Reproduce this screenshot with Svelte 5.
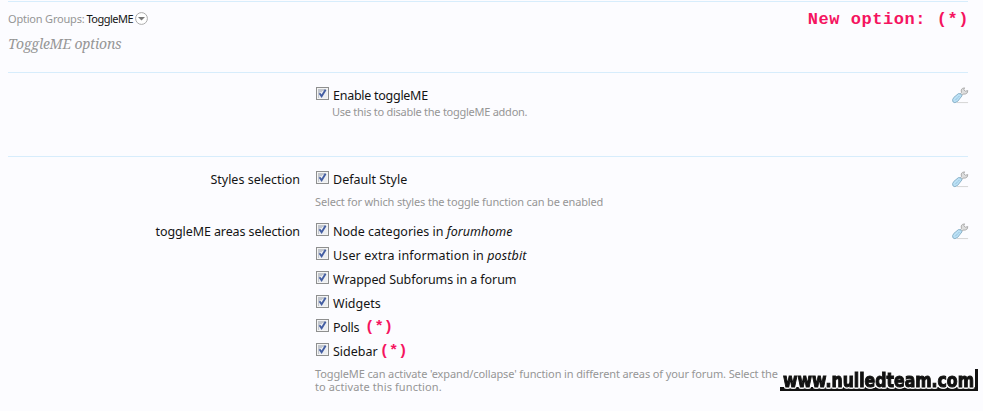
<script>
    const areas = [
        { label: "Node categories in ", place: "forumhome", fit: "nodes" },
        { label: "User extra information in ", place: "postbit", fit: "extra" },
        { label: "Wrapped Subforums in a forum", fit: "wrapped" },
        { label: "Widgets", fit: "widgets" },
        { label: "Polls", isNew: true, fit: "polls" },
        { label: "Sidebar", isNew: true, fit: "sidebar" },
    ];
</script>

{#snippet box()}
    <svg class="box" width="13" height="13" viewBox="0 0 13 13" shape-rendering="crispEdges">
        <rect width="13" height="13" fill="#8e8f8f" />
        <rect x="1" y="1" width="11" height="11" fill="#f4f4f4" />
        <rect x="2" y="2" width="9" height="9" fill="#c3c7ce" />
        <path d="M3 11V6l8-4v9z" fill="#eceef1" />
        <path d="M3.5 6.2L5.6 9.2 9.6 2.8" fill="none" stroke="#435da2" stroke-width="1.9" shape-rendering="auto" />
    </svg>
{/snippet}

{#snippet tool()}
    <svg class="tool" width="17" height="17" viewBox="0 0 18 18">
        <path d="M5 16.5H17" stroke="#d2d2d2" stroke-width="1" />
        <path
            d="M8.5 7.3L10 5.8Q9 2.6 11 1.5L13.3.9 12.5 3 14 4.5 16.7 3.8Q17 6.8 14 7.5L11.7 7.5 10.2 9z"
            fill="#dedede" stroke="#aaa" stroke-width="1"
        />
        <path d="M2 11L6.8 7Q9.8 6.4 10.6 9.3L6 15.2Q2.6 17.8 1 15.7-.2 13.5 2 11z" fill="#bce1f6" stroke="#85aec6" stroke-width="1" />
        <path d="M3.5 14L8 9.4" stroke="#86b7d3" stroke-width="1" stroke-dasharray="1.5 .7" />
    </svg>
{/snippet}

<main>
    <header>
        <div class="top">
            <div class="groups">
                <span class="crumb">Option Groups:</span>
                <span class="current">ToggleME</span>
                <svg width="13" height="13" viewBox="0 0 13 13">
                    <circle cx="6.5" cy="6.5" r="5.9" fill="#fff" stroke="#aaa" />
                    <path d="M3 5H10L6.5 8.5z" fill="#777" />
                </svg>
            </div>
            <strong class="legend">New option: (*)</strong>
        </div>
        <h1>ToggleME options</h1>
    </header>

    <section class="enable">
        <div class="row">
            <div class="name"></div>
            <div class="controls">
                <label class="check">{@render box()}<span class="enabled">Enable toggleME</span></label>
                <p class="hint indent">Use this to disable the toggleME addon.</p>
            </div>
            {@render tool()}
        </div>
    </section>

    <section class="settings">
        <div class="row styles">
            <div class="name">Styles selection</div>
            <div class="controls">
                <label class="check">{@render box()}<span>Default Style</span></label>
                <p class="hint select">Select for which styles the toggle function can be enabled</p>
            </div>
            {@render tool()}
        </div>
        <div class="row">
            <div class="name areaname">toggleME areas selection</div>
            <div class="controls">
                {#each areas as area}
                    <label class="check">
                        {@render box()}
                        <span class={area.fit}>{area.label}{#if area.place}<em>{area.place}</em>{/if}</span>
                        {#if area.isNew}<strong class="new">(*)</strong>{/if}
                    </label>
                {/each}
                <p class="hint explain">ToggleME can activate 'expand/collapse' function in different areas of your forum. Select the<br /><span>to activate this function.</span></p>
            </div>
            {@render tool()}
        </div>
    </section>

    <svg class="watermark" width="200" height="26" viewBox="0 0 200 26">
        <rect x="1" y="19" width="198" height="4" fill="#111" />
        <rect x="196" y="1" width="3" height="22" fill="#111" />
        <text x="4" y="19" textLength="191" lengthAdjust="spacingAndGlyphs">www.nulledteam.com</text>
    </svg>
</main>

<style>
    :global(body) {
        background: #fcfcff;
    }
    main {
        position: relative;
        box-sizing: border-box;
        height: 411px;
        padding: 1px 15px 0 8px;
        overflow: hidden;
        color: #141414;
        font-family: "Trebuchet MS", "Noto Sans", sans-serif;
        font-size: 12.5px;
        white-space: nowrap;
    }
    header {
        box-sizing: border-box;
        height: 71px;
        border-top: 1px solid #d7edfc;
    }
    .top {
        display: flex;
        justify-content: space-between;
        height: 33px;
        align-items: center;
    }
    .groups {
        display: flex;
        align-items: center;
        font-size: 11px;
    }
    .crumb {
        width: 78.5px;
        color: #969696;
        letter-spacing: -0.2px;
    }
    .current {
        width: 48.5px;
        letter-spacing: -0.5px;
    }
    .legend,
    .new {
        color: #f5145f;
        font-family: "Courier New", "Liberation Mono", monospace;
    }
    .legend {
        margin: 2px -1px 0 0;
        font-size: 17px;
        letter-spacing: 0.55px;
    }
    h1 {
        margin: 0;
        color: #969696;
        font: italic 14px/18px Georgia, "Noto Serif", "Liberation Serif", serif;
        letter-spacing: -0.22px;
    }
    section {
        box-sizing: border-box;
        border-top: 1px solid #d7edfc;
    }
    .enable {
        height: 84px;
        padding-top: 10px;
    }
    .settings {
        padding-top: 10px;
    }
    .row {
        display: grid;
        grid-template-columns: 292px 1fr 17px;
        column-gap: 15px;
        margin-right: -1px;
    }
    .styles {
        height: 52px;
    }
    .name {
        text-align: right;
        line-height: 26px;
    }
    .areaname {
        letter-spacing: -0.1px;
    }
    .check {
        display: flex;
        align-items: center;
        height: 24px;
    }
    .box {
        flex: none;
        margin: -4px 4px 0 1px;
    }
    .enabled {
        letter-spacing: -0.27px;
    }
    .extra {
        letter-spacing: 0.13px;
    }
    .wrapped {
        letter-spacing: -0.08px;
    }
    .polls {
        letter-spacing: -0.3px;
    }
    .new {
        margin-left: 6px;
        font-size: 15.5px;
    }
    .sidebar + .new {
        margin-left: 2px;
    }
    .hint {
        margin: 4px 0 0;
        color: #969696;
        font-size: 11px;
        line-height: 13px;
    }
    .indent {
        margin: -2px 0 0 17px;
        letter-spacing: -0.26px;
    }
    .select {
        letter-spacing: -0.15px;
    }
    .explain {
        letter-spacing: -0.12px;
    }
    .explain span {
        letter-spacing: 0.1px;
    }
    .tool {
        margin-top: 4px;
    }
    .watermark {
        position: absolute;
        left: 779px;
        top: 368px;
        overflow: visible;
    }
    .watermark text {
        fill: #111;
        stroke: #111;
        stroke-width: 1.1px;
        font: bold 20px "DejaVu Sans", sans-serif;
        filter: drop-shadow(1px 0 0 #fff) drop-shadow(-1px 0 0 #fff) drop-shadow(0 1px 0 #fff);
    }
</style>
